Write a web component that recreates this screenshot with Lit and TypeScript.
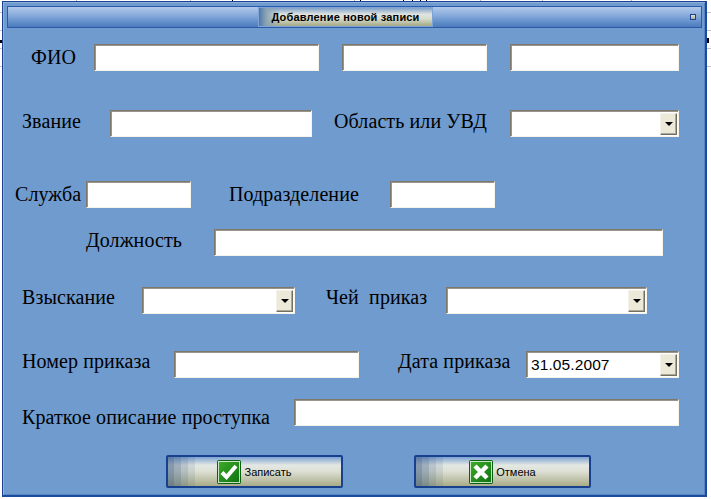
import { LitElement, html, css, svg } from "lit";
import { customElement } from "lit/decorators.js";

const arrow = html`<span class="btn"><i class="tri"></i></span>`;

@customElement("app-root")
export class AppRoot extends LitElement {
  static styles = css`
    :host { display: block; position: relative; width: 711px; height: 499px; background: #fff; overflow: hidden; font-family: "Liberation Serif", serif; color: #000; }
    .bg { position: absolute; inset: 0; width: 711px; height: 499px; }
    .win { position: absolute; left: 2px; top: 1px; width: 705px; height: 496px; box-sizing: border-box; background: #6f9bcf; border: 1px solid #1c3f93; border-right: 2px solid #1c4aa0; border-bottom: 2px solid #1c4aa0; box-shadow: inset 1px 1px 0 #8fb0da, inset -1px -1px 0 #5a86c0; padding: 4px 0 0 4px; }
    .title { width: 695px; height: 22px; box-sizing: border-box; border: 1px solid #2d5aa8; background: linear-gradient(#b0c9ea, #94b3df 30%, #6d98d0 65%, #4b7bbd); display: flex; align-items: center; justify-content: space-between; padding-right: 5px; }
    .tab { margin-left: 250px; width: 175px; height: 20px; box-sizing: border-box; border: 1px solid #7ea3d6; background: linear-gradient(90deg, #4f78a8, #8aa3b4 4%, transparent 12%), linear-gradient(#7ea0c8, #dfe4e0 35%, #d7dccb 60%, #a3a888); display: flex; align-items: center; justify-content: center; font: bold 11px "Liberation Sans", sans-serif; letter-spacing: 0.18px; }
    .sq { width: 4px; height: 4px; box-sizing: content-box; border: 1px solid #1f3f93; background: linear-gradient(#dfe2d4, #a9ae95); }
    .form { margin-left: -5px; }
    .row { display: grid; align-items: center; height: 27px; grid-template-rows: 27px; }
    .lab { font-size: 20px; line-height: 27px; align-self: start; white-space: pre; letter-spacing: 0.1px; }
    .f { box-sizing: border-box; height: 27px; background: #fff; border: 1px solid; border-color: #7d786c #f6f3ea #f6f3ea #7d786c; box-shadow: inset 1px 1px 0 #9a958a; padding-left: 1px; display: flex; align-items: center; justify-content: space-between; overflow: hidden; }
    .btn { width: 17px; height: 22px; box-sizing: border-box; background: #ece9d8; border: 1px solid; border-color: #f4f2e8 #716f64 #716f64 #f4f2e8; display: flex; align-items: center; justify-content: center; margin-right: 1px; box-shadow: inset -1px -1px 0 #aca899; flex: none; }
    .tri { width: 0; height: 0; border-left: 4px solid transparent; border-right: 4px solid transparent; border-top: 4px solid #000; }
    .date { font: 15.5px "Liberation Sans", sans-serif; padding-left: 3px; letter-spacing: 0.1px; }

    .r1 { margin-top: 16px; padding-left: 29px; grid-template-columns: 63px 225px 23px 145px 23px 169px; }
    .r2 { margin-top: 39px; padding-left: 20px; grid-template-columns: 88px 202px 22px 176px 169px; }
    .r3 { margin-top: 44px; padding-left: 13px; grid-template-columns: 71px 105px 38px 161px 105px; }
    .r4 { margin-top: 21px; padding-left: 84px; grid-template-columns: 128px 449px; }
    .r5 { margin-top: 31px; padding-left: 20px; grid-template-columns: 120px 153px 31px 120px 201px; }
    .r6 { margin-top: 37px; padding-left: 20px; grid-template-columns: 152px 185px 39px 128px 153px; }
    .r7 { margin-top: 21px; padding-left: 20px; grid-template-columns: 272px 385px; }
    .r2 .lab, .r4 .lab { line-height: 23px; }
    .r5 .lab, .r6 .lab { line-height: 21px; }
    .r7 .lab { line-height: 37px; }

    .bar { display: flex; margin-top: 29px; padding-left: 164px; gap: 71px; }
    .b { width: 177px; height: 33px; box-sizing: border-box; border: 2px solid #17408f; border-radius: 2px; background:
        linear-gradient(90deg, rgba(60,90,130,.55) 0 6px, rgba(60,90,130,.4) 6px 13px, rgba(60,90,130,.25) 13px 20px, rgba(60,90,130,.12) 20px 27px, transparent 27px),
        linear-gradient(#7da2d2, #e4e8e4 28%, #dcdfd3 50%, #a9ac86);
      display: flex; align-items: center; justify-content: center; font: 11px "Liberation Sans", sans-serif; gap: 3px; }
    .b svg { flex: none; }
  `;

  private ico(kind: "ok" | "no") {
    return html`<svg width="24" height="24" viewBox="0 0 24 24">
      <defs><linearGradient id="g${kind}" x1="0" y1="0" x2="1" y2="1"><stop offset="0" stop-color="#3fae2a"/><stop offset="1" stop-color="#0c6f10"/></linearGradient></defs>
      <rect x=".5" y=".5" width="23" height="23" rx="1" fill="url(#g${kind})" stroke="#0b5f12"/>
      <rect x="1.5" y="1.5" width="21" height="21" fill="none" stroke="#fff" stroke-opacity=".75"/>
      ${kind === "ok"
        ? svg`<path d="M5 12.5l4.5 4.5L19 6" fill="none" stroke="#fff" stroke-width="4"/>`
        : svg`<path d="M6 6l12 12M18 6L6 18" fill="none" stroke="#fff" stroke-width="4.5"/>`}
    </svg>`;
  }

  render() {
    const ticks = [76, 190, 354, 480, 542, 631];
    const blacks = [232, 360, 403, 412, 420, 426];
    return html`
      <svg class="bg" viewBox="0 0 711 499">
        ${ticks.map((x) => svg`<line x1=${x + 0.5} y1="0" x2=${x + 0.5} y2="1" stroke="#b5b5b5"/>`)}
        ${blacks.map((x) => svg`<line x1=${x + 0.5} y1="0" x2=${x + 0.5} y2="1" stroke="#000"/>`)}
        ${[12, 30, 48, 66].map((y) => svg`<line x1="0" y1=${y + 0.5} x2="2" y2=${y + 0.5} stroke="#c4c4c4"/><line x1="707" y1=${y + 0.5} x2="711" y2=${y + 0.5} stroke="#c4c4c4"/>`)}
        <rect x="0" y="40" width="2" height="3" fill="#000"/>
        <rect x="707" y="38" width="2" height="5" fill="#000"/>
      </svg>
      <div class="win">
        <div class="title">
          <div class="tab">Добавление новой записи</div>
          <div class="sq"></div>
        </div>
        <div class="form">
          <div class="row r1"><span class="lab">ФИО</span><div class="f"></div><span></span><div class="f"></div><span></span><div class="f"></div></div>
          <div class="row r2"><span class="lab">Звание</span><div class="f"></div><span></span><span class="lab">Область или УВД</span><div class="f"><span></span>${arrow}</div></div>
          <div class="row r3"><span class="lab">Служба</span><div class="f"></div><span></span><span class="lab">Подразделение</span><div class="f"></div></div>
          <div class="row r4"><span class="lab">Должность</span><div class="f"></div></div>
          <div class="row r5"><span class="lab">Взыскание</span><div class="f"><span></span>${arrow}</div><span></span><span class="lab">Чей  приказ</span><div class="f"><span></span>${arrow}</div></div>
          <div class="row r6"><span class="lab">Номер приказа</span><div class="f"></div><span></span><span class="lab">Дата приказа</span><div class="f"><span class="date">31.05.2007</span>${arrow}</div></div>
          <div class="row r7"><span class="lab">Краткое описание проступка</span><div class="f"></div></div>
          <div class="bar">
            <div class="b">${this.ico("ok")}<span>Записать</span></div>
            <div class="b">${this.ico("no")}<span>Отмена</span></div>
          </div>
        </div>
      </div>
    `;
  }
}
